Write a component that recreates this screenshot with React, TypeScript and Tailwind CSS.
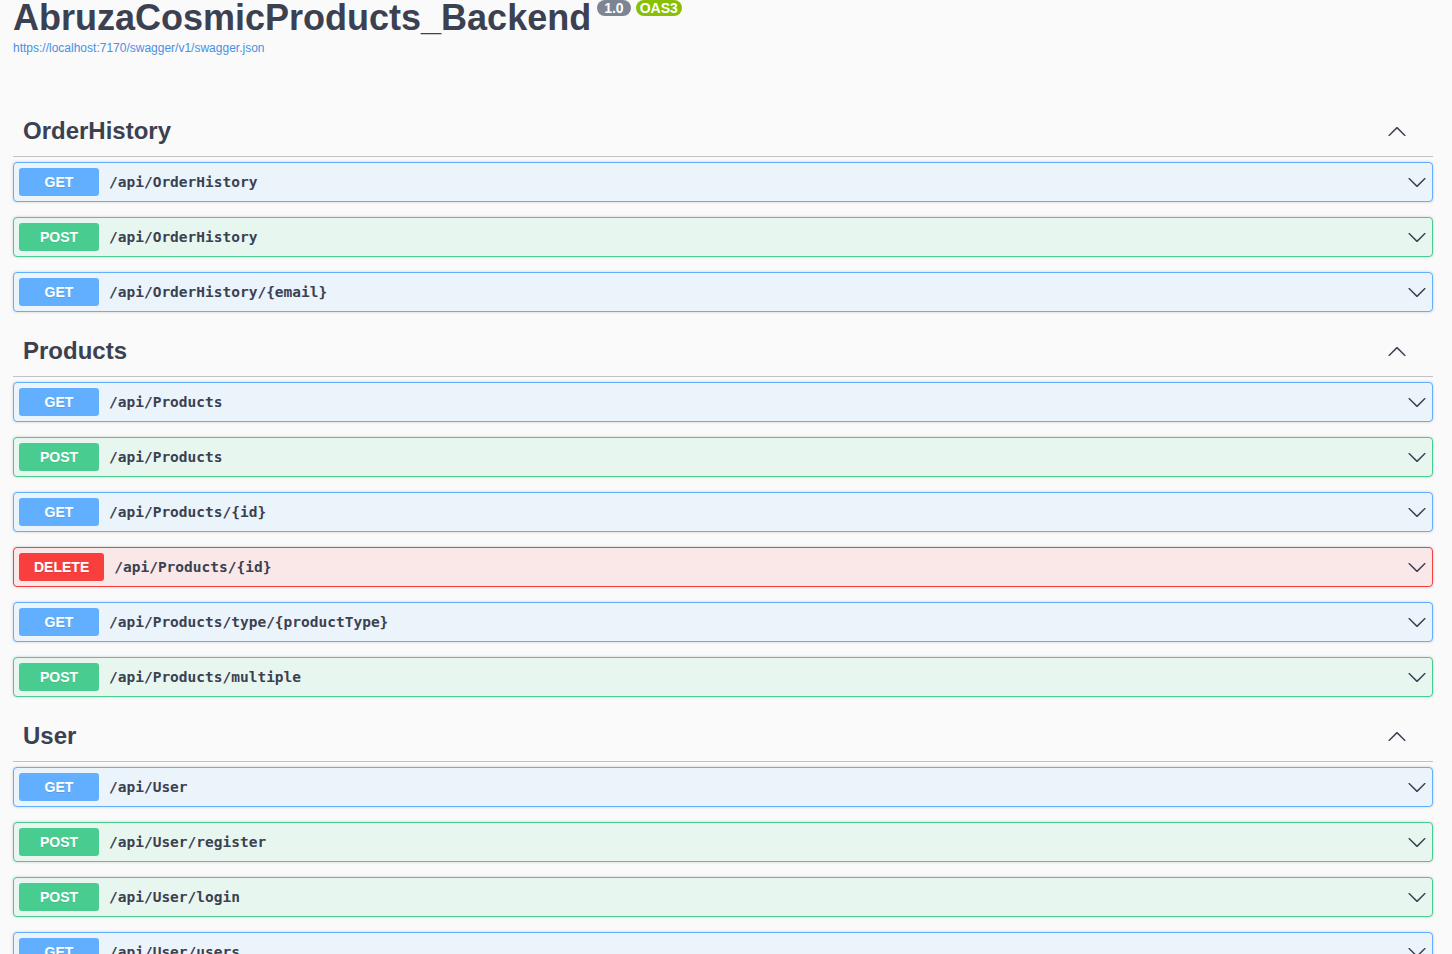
import React from "react";

type Method = "GET" | "POST" | "DELETE";

const styles: Record<Method, { row: string; badge: string }> = {
  GET: { row: "bg-[#ebf3fb] border-[#61affe]", badge: "bg-[#61affe]" },
  POST: { row: "bg-[#e8f6f0] border-[#49cc90]", badge: "bg-[#49cc90]" },
  DELETE: { row: "bg-[#fae7e7] border-[#f93e3e]", badge: "bg-[#f93e3e] px-[15px]" },
};

const sections: { name: string; ops: [Method, string][] }[] = [
  {
    name: "OrderHistory",
    ops: [
      ["GET", "/api/OrderHistory"],
      ["POST", "/api/OrderHistory"],
      ["GET", "/api/OrderHistory/{email}"],
    ],
  },
  {
    name: "Products",
    ops: [
      ["GET", "/api/Products"],
      ["POST", "/api/Products"],
      ["GET", "/api/Products/{id}"],
      ["DELETE", "/api/Products/{id}"],
      ["GET", "/api/Products/type/{productType}"],
      ["POST", "/api/Products/multiple"],
    ],
  },
  {
    name: "User",
    ops: [
      ["GET", "/api/User"],
      ["POST", "/api/User/register"],
      ["POST", "/api/User/login"],
      ["GET", "/api/User/users"],
    ],
  },
];

const ARROW =
  "M17.418 6.109c.272-.268.709-.268.979 0s.271.701 0 .969l-7.908 7.83c-.27.268-.707.268-.979 0l-7.908-7.83c-.27-.268-.27-.701 0-.969.271-.268.709-.268.979 0L10 13.25l7.418-7.141z";

const ArrowDown = () => (
  <svg width="20" height="20" viewBox="0 0 20 20" fill="#3b4151">
    <path d={ARROW} />
  </svg>
);

const ArrowUp = () => (
  <svg width="20" height="20" viewBox="0 0 20 20" fill="#3b4151">
    <g transform="rotate(180 10 10)">
      <path d={ARROW} />
    </g>
  </svg>
);

function Row({ method, path }: { method: Method; path: string }) {
  const s = styles[method];
  return (
    <div
      className={`flex h-[40px] items-center rounded-[4px] border px-[5px] shadow-[0_0_3px_rgba(0,0,0,0.19)] ${s.row}`}
    >
      <div
        className={`flex h-[28px] min-w-[80px] items-center justify-center rounded-[3px] pt-[1px] text-[14px] font-bold text-white [text-shadow:0_1px_0_rgba(0,0,0,0.1)] ${s.badge}`}
      >
        {method}
      </div>
      <div className="ml-[10px] pt-[2px] font-['DejaVu_Sans_Mono',monospace] text-[14.5px] font-bold text-[#3b4151]">
        {path}
      </div>
      <div className="ml-auto flex items-center">
        <ArrowDown />
      </div>
    </div>
  );
}

export default function App() {
  return (
    <div className="h-[954px] overflow-hidden bg-[#fafafa] font-['Liberation_Sans',Arial,sans-serif] text-[#3b4151]">
      <div className="ml-[13px] w-[1420px]">
        <div className="flex items-start">
          <h2 className="text-[36px] font-bold leading-[36px] text-[#3b4151]">AbruzaCosmicProducts_Backend</h2>
          <span className="ml-[6px] flex h-[16px] items-center rounded-full bg-[#7d8492] px-[7px] text-[14px] font-bold leading-none text-white">
            1.0
          </span>
          <span className="ml-[5px] flex h-[16px] items-center rounded-full bg-[#89bf04] px-[4px] text-[14px] font-bold leading-none text-white">
            OAS3
          </span>
        </div>
        <div className="mt-[5px] text-[12px] leading-[14px] text-[#4990e2]">
          https://localhost:7170/swagger/v1/swagger.json
        </div>
        <div className="mt-[52px]">
          {sections.map((sec) => (
            <div key={sec.name}>
              <div className="flex h-[50px] items-center border-b border-[#3b41514d] pl-[10px] pr-[26px]">
                <h3 className="-mt-[1px] text-[24px] font-bold text-[#3b4151]">{sec.name}</h3>
                <div className="ml-auto flex items-center">
                  <ArrowUp />
                </div>
              </div>
              <div className="mt-[5px] flex flex-col gap-[15px] pb-[15px]">
                {sec.ops.map(([m, p], i) => (
                  <Row key={i} method={m} path={p} />
                ))}
              </div>
            </div>
          ))}
        </div>
      </div>
    </div>
  );
}
